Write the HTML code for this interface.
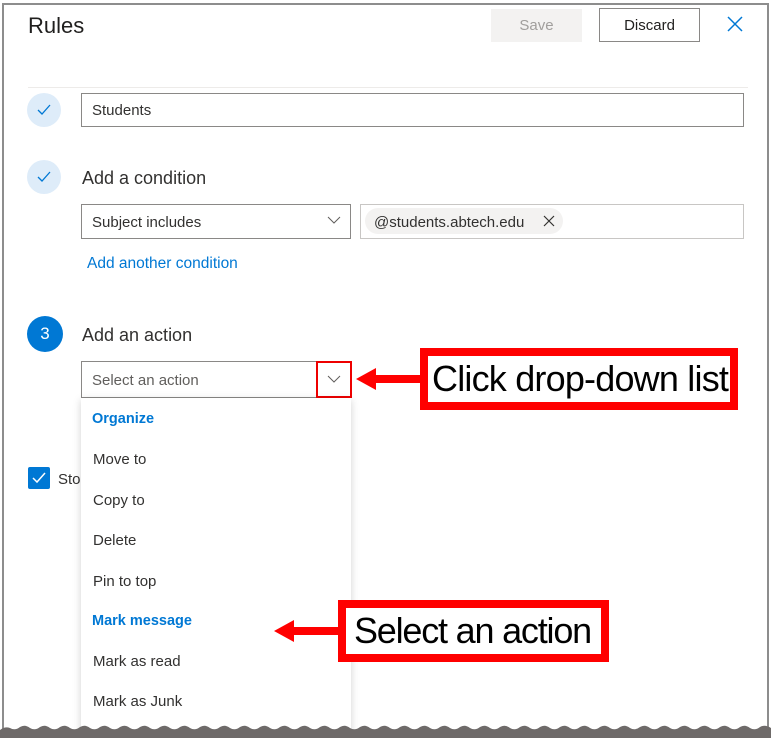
<!DOCTYPE html>
<html><head><meta charset="utf-8"><style>
*{margin:0;padding:0;box-sizing:border-box}
body{width:771px;height:738px;overflow:hidden;background:#fff;font-family:"Segoe UI","Liberation Sans",sans-serif;position:relative;color:#323130}
.a{position:absolute}
.t{font-size:15px;color:#323130}
.box{position:absolute;border:1px solid #8a8886;background:#fff}
.circ{position:absolute;width:34px;height:34px;border-radius:50%;background:#deecf9}
.item{position:absolute;left:93px;font-size:15px;color:#323130}
.hd{color:#0078d4;font-weight:bold;font-size:14.5px}
.red{position:absolute;border:8px solid #ff0000;background:#fff;font-family:"Liberation Sans",sans-serif;color:#000;font-size:36px;white-space:nowrap}
</style></head><body>
<div class="a" style="left:2px;top:3px;width:767px;height:735px;border:2px solid #8d8d8d;border-bottom:none"></div>
<div class="a" style="left:28px;top:13px;font-size:22px;color:#201f1e">Rules</div>
<div class="a" style="left:491px;top:9px;width:91px;height:33px;background:#f3f2f1;color:#a19f9d;font-size:15px;text-align:center;line-height:33px">Save</div>
<div class="a" style="left:599px;top:8px;width:101px;height:34px;border:1px solid #8a8886;font-size:15px;text-align:center;line-height:34px;color:#201f1e">Discard</div>
<svg class="a" style="left:727px;top:16px" width="16" height="16"><path d="M1 1L15 15M15 1L1 15" stroke="#0078d4" stroke-width="1.5"/></svg>
<div class="a" style="left:28px;top:87px;width:720px;height:1px;background:#edebe9"></div>

<div class="circ" style="left:27px;top:93px"></div>
<svg class="a" style="left:37px;top:104px" width="14" height="12"><path d="M1 6L5 10L13 1" stroke="#0078d4" stroke-width="1.3" fill="none"/></svg>
<div class="box" style="left:81px;top:93px;width:663px;height:34px"></div>
<div class="a t" style="left:92px;top:102px">Students</div>

<div class="circ" style="left:27px;top:160px"></div>
<svg class="a" style="left:37px;top:171px" width="14" height="12"><path d="M1 6L5 10L13 1" stroke="#0078d4" stroke-width="1.3" fill="none"/></svg>
<div class="a" style="left:82px;top:168px;font-size:18px;color:#323130">Add a condition</div>
<div class="box" style="left:81px;top:204px;width:270px;height:35px"></div>
<div class="a t" style="left:92px;top:214px">Subject includes</div>
<svg class="a" style="left:327px;top:216px" width="14" height="9"><path d="M1 1L7 7L13 1" stroke="#605e5c" stroke-width="1" fill="none"/></svg>
<div class="box" style="left:360px;top:204px;width:384px;height:35px;border-color:#c8c6c4"></div>
<div class="a" style="left:365px;top:208px;width:198px;height:26px;border-radius:13px;background:#f3f2f1"></div>
<div class="a t" style="left:374px;top:214px">@students.abtech.edu</div>
<svg class="a" style="left:543px;top:215px" width="12" height="12"><path d="M1 1L11 11M11 1L1 11" stroke="#323130" stroke-width="1.2"/></svg>
<div class="a" style="left:87px;top:255px;font-size:15.5px;color:#0078d4">Add another condition</div>

<div class="a" style="left:27px;top:316px;width:36px;height:36px;border-radius:50%;background:#0078d4;color:#fff;font-size:17px;text-align:center;line-height:35px">3</div>
<div class="a" style="left:82px;top:325px;font-size:18px">Add an action</div>
<div class="box" style="left:81px;top:361px;width:270px;height:37px"></div>
<div class="a t" style="left:92px;top:372px;color:#605e5c">Select an action</div>
<div class="a" style="left:316px;top:361px;width:36px;height:37px;border:2px solid #e00"></div>
<svg class="a" style="left:327px;top:375px" width="14" height="9"><path d="M1 1L7 7L13 1" stroke="#605e5c" stroke-width="1" fill="none"/></svg>

<div class="a" style="left:28px;top:467px;width:22px;height:22px;border-radius:2px;background:#0078d4"></div>
<svg class="a" style="left:32px;top:472px" width="14" height="12"><path d="M1 6L5 10L13 1" stroke="#fff" stroke-width="1.5" fill="none"/></svg>
<div class="a t" style="left:58px;top:471px">Sto</div>

<div class="a" style="left:81px;top:398px;width:270px;height:340px;background:#fff;box-shadow:0 2px 8px rgba(0,0,0,.18)"></div>
<div class="item hd" style="left:92px;top:411px">Organize</div>
<div class="item" style="top:451px">Move to</div>
<div class="item" style="top:492px">Copy to</div>
<div class="item" style="top:532px">Delete</div>
<div class="item" style="top:573px">Pin to top</div>
<div class="item hd" style="left:92px;top:613px">Mark message</div>
<div class="item" style="top:653px">Mark as read</div>
<div class="item" style="top:693px">Mark as Junk</div>

<svg class="a" style="left:356px;top:367px" width="66" height="24"><path d="M0 12L20 1V8H66V16H20V23Z" fill="#f00"/></svg>
<div class="red" style="left:420px;top:348px;width:318px;height:62px;line-height:46px;padding-left:4px;letter-spacing:-0.8px">Click drop-down list</div>
<svg class="a" style="left:274px;top:619px" width="66" height="24"><path d="M0 12L20 1V8H66V16H20V23Z" fill="#f00"/></svg>
<div class="red" style="left:338px;top:600px;width:271px;height:62px;line-height:46px;padding-left:8px;letter-spacing:-1.2px">Select an action</div>

<svg class="a" style="left:0;top:722px" width="771" height="16"><path d="M0 8 Q5 4 10 6 Q15 9 20 5 Q25 2 30 6 Q35 9 40 5 Q45 2 50 6 Q55 9 60 5 Q65 2 70 6 Q75 9 80 5 Q85 2 90 6 Q95 9 100 5 Q105 2 110 6 Q115 9 120 5 Q125 2 130 6 Q135 9 140 5 Q145 2 150 6 Q155 9 160 5 Q165 2 170 6 Q175 9 180 5 Q185 2 190 6 Q195 9 200 5 Q205 2 210 6 Q215 9 220 5 Q225 2 230 6 Q235 9 240 5 Q245 2 250 6 Q255 9 260 5 Q265 2 270 6 Q275 9 280 5 Q285 2 290 6 Q295 9 300 5 Q305 2 310 6 Q315 9 320 5 Q325 2 330 6 Q335 9 340 5 Q345 2 350 6 Q355 9 360 5 Q365 2 370 6 Q375 9 380 5 Q385 2 390 6 Q395 9 400 5 Q405 2 410 6 Q415 9 420 5 Q425 2 430 6 Q435 9 440 5 Q445 2 450 6 Q455 9 460 5 Q465 2 470 6 Q475 9 480 5 Q485 2 490 6 Q495 9 500 5 Q505 2 510 6 Q515 9 520 5 Q525 2 530 6 Q535 9 540 5 Q545 2 550 6 Q555 9 560 5 Q565 2 570 6 Q575 9 580 5 Q585 2 590 6 Q595 9 600 5 Q605 2 610 6 Q615 9 620 5 Q625 2 630 6 Q635 9 640 5 Q645 2 650 6 Q655 9 660 5 Q665 2 670 6 Q675 9 680 5 Q685 2 690 6 Q695 9 700 5 Q705 2 710 6 Q715 9 720 5 Q725 2 730 6 Q735 9 740 5 Q745 2 750 6 Q755 9 760 5 Q765 2 771 6 V16 H0Z" fill="#6e6a69"/></svg>
</body></html>
